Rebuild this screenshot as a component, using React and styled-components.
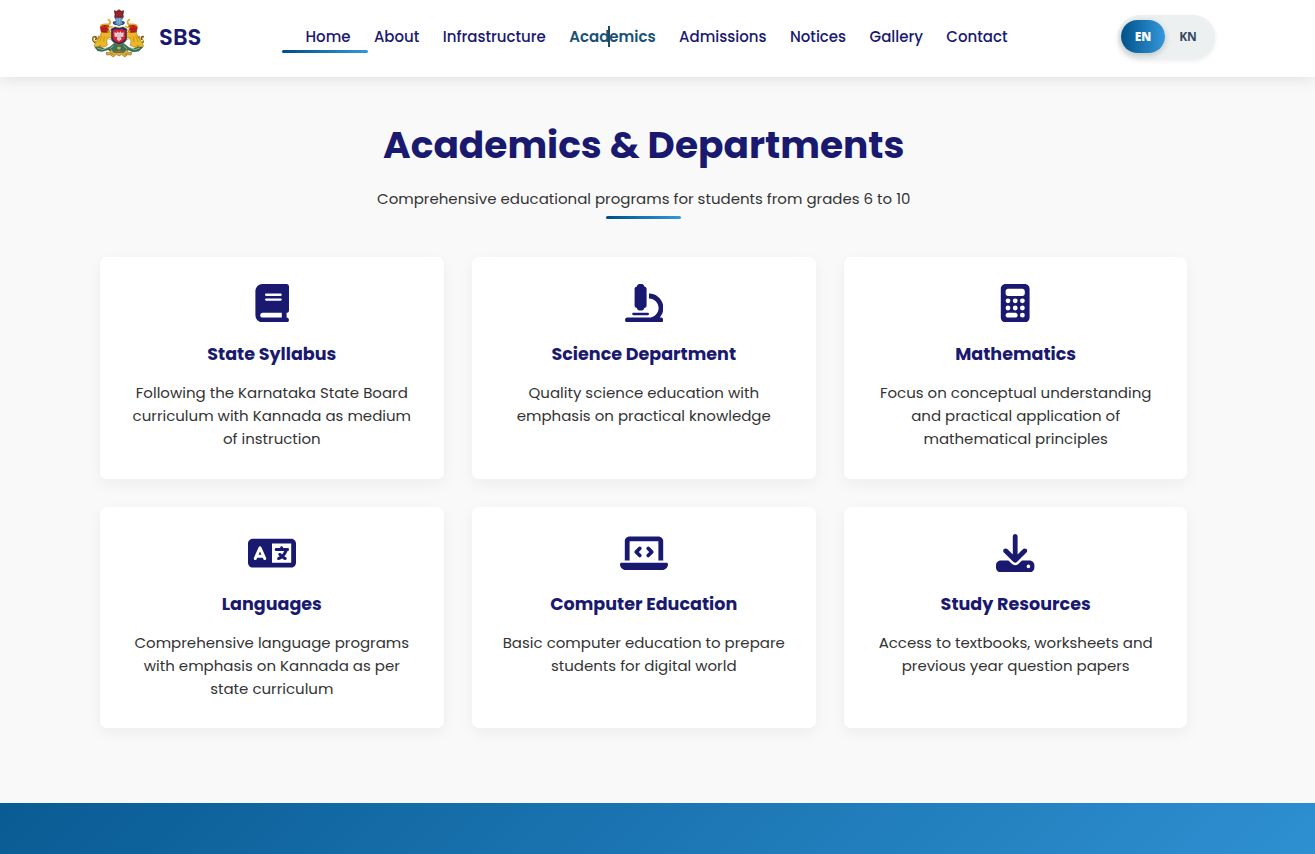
import React from "react";
import styled, { createGlobalStyle } from "styled-components";
import {
  FaBook,
  FaMicroscope,
  FaCalculator,
  FaLanguage,
  FaLaptopCode,
  FaDownload,
} from "react-icons/fa6";

const navy = "#191970";

const GlobalStyle = createGlobalStyle`
  *, *::before, *::after { box-sizing: border-box; }
  body {
    margin: 0;
    background: #f9f9f9;
    color: #333;
    font-family: Poppins, Inter, sans-serif;
    font-size: 15px;
  }
  h1, h2, h3, p { margin: 0; }
`;

const Page = styled.div`
  height: 854px;
  display: flex;
  flex-direction: column;
  overflow: hidden;
`;

const Header = styled.header`
  position: relative;
  flex: none;
  height: 77px;
  display: flex;
  align-items: flex-start;
  padding-left: 92px;
  background: #fff;
  box-shadow: 0 2px 15px rgba(0, 0, 0, 0.1);
`;

const Brand = styled.div`
  width: 213.5px;
  display: flex;
  align-items: flex-start;
  padding-top: 9px;
  gap: 15px;
`;

const BrandName = styled.span`
  padding-top: 15px;
  font-size: 22.8px;
  line-height: 27px;
  font-weight: 600;
  color: ${navy};
`;

const Nav = styled.nav`
  width: 812.5px;
  display: flex;
  gap: 23.4px;
  padding-top: 26px;
`;

const NavLink = styled.a`
  position: relative;
  flex: none;
  line-height: 22px;
  white-space: nowrap;
  font-weight: ${(p) => (p.$active ? 600 : 500)};
  color: ${(p) => (p.$active ? "#1a5276" : navy)};
`;

const Underline = styled.i`
  position: absolute;
  left: -23.5px;
  top: 24px;
  width: 86px;
  height: 3px;
  border-radius: 2px;
  background: linear-gradient(90deg, #004e89, #3498db);
`;

const CenterBar = styled.i`
  position: absolute;
  left: 38.8px;
  top: 0;
  width: 2px;
  height: 21px;
  background: #154c6e;
`;

const LangSwitch = styled.div`
  display: flex;
  align-items: flex-start;
  width: 97px;
  height: 44px;
  margin-top: 15px;
  padding: 5px 3px;
  border-radius: 22px;
  background: #ecf0f1;
  box-shadow: 0 2px 5px rgba(0, 0, 0, 0.08);
`;

const LangButton = styled.button`
  width: ${(p) => (p.$on ? 44 : 46)}px;
  height: 33px;
  padding: 0;
  border: 0;
  border-radius: 17px;
  font: ${(p) => (p.$on ? 800 : 700)} 12px/33px "Open Sans", sans-serif;
  color: ${(p) => (p.$on ? "#fff" : "#34495e")};
  background: ${(p) => (p.$on ? "linear-gradient(90deg, #005288, #3498db)" : "none")};
  box-shadow: ${(p) => (p.$on ? "0 2px 6px rgba(0, 0, 0, 0.2)" : "none")};
`;

const Main = styled.main`
  flex: 1;
  padding: 44px 127.5px 0 100px;
`;

const Intro = styled.section`
  display: flex;
  flex-direction: column;
  align-items: center;
  height: 136px;
`;

const Title = styled.h1`
  font-size: 37.5px;
  line-height: 48px;
  font-weight: 700;
  color: ${navy};
  white-space: nowrap;
`;

const Subtitle = styled.p`
  margin-top: 18px;
  line-height: 23px;
  white-space: nowrap;
`;

const Rule = styled.i`
  margin-top: 6px;
  width: 75px;
  height: 3px;
  border-radius: 2px;
  background: linear-gradient(90deg, #004e89, #3498db);
`;

const Grid = styled.section`
  display: grid;
  grid-template-columns: repeat(3, 1fr);
  grid-auto-rows: 221.5px;
  gap: 28.3px;
`;

const Card = styled.article`
  display: flex;
  flex-direction: column;
  align-items: center;
  padding-top: 27px;
  border-radius: 7px;
  background: #fff;
  box-shadow: 0 5px 15px rgba(0, 0, 0, 0.05);
`;

const CardIcon = styled.span`
  height: 38.4px;
  color: ${navy};
  svg {
    display: block;
    height: 38.4px;
    width: ${(p) => (p.$wide ? 48 : 38.4)}px;
  }
`;

const CardTitle = styled.h3`
  margin-top: 17.6px;
  font-size: 17.55px;
  line-height: 28px;
  font-weight: 700;
  color: ${navy};
`;

const CardText = styled.p`
  margin-top: 13.5px;
  padding: 0 28px;
  line-height: 23px;
  text-align: center;
`;

const Footer = styled.footer`
  flex: none;
  height: 51px;
  background: linear-gradient(135deg, #095b93, #3498db) 0 0 / 100% 270px no-repeat;
`;

const links = [
  "Home",
  "About",
  "Infrastructure",
  "Academics",
  "Admissions",
  "Notices",
  "Gallery",
  "Contact",
];

const cards = [
  [FaBook, "State Syllabus", "Following the Karnataka State Board curriculum with Kannada as medium of instruction"],
  [FaMicroscope, "Science Department", "Quality science education with emphasis on practical knowledge"],
  [FaCalculator, "Mathematics", "Focus on conceptual understanding and practical application of mathematical principles"],
  [FaLanguage, "Languages", "Comprehensive language programs with emphasis on Kannada as per state curriculum", true],
  [FaLaptopCode, "Computer Education", "Basic computer education to prepare students for digital world", true],
  [FaDownload, "Study Resources", "Access to textbooks, worksheets and previous year question papers"],
];

function Supporter() {
  return (
    <g>
      <path d="M24 110C12 107 12 93 20 92c7 0 6 9 1 8M26 110c8-3 2-12 7-20" fill="none" stroke="#7a5a18" strokeWidth="5" />
      <path d="M24 109C14 106 13 94 20 93M26 109c8-3 2-12 7-19" fill="none" stroke="#e9b51e" strokeWidth="3" />
      <path d="M40 79l24-3 10 12-2 8-12-2-4 12 2 12-9 5-14 1 3-7-9 6-11-2 5-12 12-16z" fill="#ebb925" stroke="#8a6415" strokeWidth="1.5" />
      <path d="M36 65c0-8 8-12 17-11l12 5-3 10 3 9-11 3-15-2z" fill="#c7281b" />
      <path d="M38 59c6-7 17-3 24-4 7-2 5-15-3-14" fill="none" stroke="#dba929" strokeWidth="5" />
      <path d="M59 66l15-5M58 77l14-7" stroke="#dba929" strokeWidth="4" />
      <path d="M58 97l13 5M42 89l-7 18M49 91l-2 17" stroke="#b98316" strokeWidth="2" />
      <path d="M39 68l20 1M40 75l18 1" stroke="#701b17" strokeWidth="2" />
      <circle cx="50" cy="59" r="2" fill="#4b3518" />
    </g>
  );
}

function Emblem() {
  return (
    <svg width="52" height="49" viewBox="12 9 156 147" aria-label="Karnataka emblem">
      <path d="M21 124l13-3 15 8 17-6 14-12 26 1 15 12 15 5 13-7 15 2-12 11-17 2-16-6-17 9H76l-16-9-17 5-14-2z" fill="#397358" stroke="#285640" strokeWidth="2" />
      <path d="M28 126l16 5 17-7M155 126l-15 5-17-7M66 128l11-9M117 128l-11-9" stroke="#bed0ad" strokeWidth="2" fill="none" />
      <Supporter />
      <g transform="translate(185 0) scale(-1 1)"><Supporter /></g>
      <path d="M78 46c-7 3-3 11 4 11h21c8-1 10-9 3-12z" fill="#334b7b" />
      <path d="M81 35h23l-4 10 5 8-12 7-13-7 5-8z" fill="#5d9cc7" stroke="#2a4778" strokeWidth="2" />
      <path d="M87 37v13M94 36v17M100 38v12" stroke="#b5dbe9" strokeWidth="1.5" />
      <path d="M79 14l7 2 7-5 7 5 7-2-2 11 1 9H80l1-9z" fill="#8e2229" stroke="#59171d" strokeWidth="2" />
      <path d="M86 22v9M93 19v12M99 23v8" stroke="#a93a3a" strokeWidth="1.5" />
      <path d="M69 68l12-6 12 3 12-3 12 6v30c-2 9-11 14-24 19-13-5-22-10-24-19z" fill="#292a62" stroke="#d5a62d" strokeWidth="1.5" />
      <path d="M74 74l10-5 9 2 9-2 10 5v23c-3 7-10 10-19 14-9-4-16-7-19-14z" fill="#d9202d" />
      <path d="M93 106l-7-7 3-7-9 1-1-14 8 2 1-5 5 5 5-5 2 5 7-2-1 14-9-1 4 7z" fill="#ead5da" />
      <path d="M93 82v20M85 84l4 6M101 84l-4 6" stroke="#b59aa3" strokeWidth="1.5" />
      <path d="M93 120l8 4-4 8h-8l-5-8z" fill="#b8ae5a" stroke="#285640" strokeWidth="2" />
      <path d="M55 139l10 1 4-10 8 9 16-4 16 4 8-9 4 10 10-1-2 8-10-1-9 7-9-8-8 5-8-5-9 8-10-7-10 1z" fill="#dfb13b" stroke="#876522" strokeWidth="2" />
      <path d="M67 142l9 3M78 140l15-1 15 1M110 145l8-3" stroke="#72571d" strokeWidth="2" />
    </svg>
  );
}

export default function App() {
  return (
    <Page>
      <GlobalStyle />
      <Header>
        <Brand>
          <Emblem />
          <BrandName>SBS</BrandName>
        </Brand>
        <Nav>
          {links.map((label) => (
            <NavLink key={label} $active={label === "Academics"}>
              {label}
              {label === "Home" && <Underline />}
              {label === "Academics" && <CenterBar />}
            </NavLink>
          ))}
        </Nav>
        <LangSwitch>
          <LangButton $on>EN</LangButton>
          <LangButton>KN</LangButton>
        </LangSwitch>
      </Header>
      <Main>
        <Intro>
          <Title>Academics &amp; Departments</Title>
          <Subtitle>Comprehensive educational programs for students from grades 6 to 10</Subtitle>
          <Rule />
        </Intro>
        <Grid>
          {cards.map(([Icon, title, text, wide]) => (
            <Card key={title}>
              <CardIcon $wide={wide}><Icon /></CardIcon>
              <CardTitle>{title}</CardTitle>
              <CardText>{text}</CardText>
            </Card>
          ))}
        </Grid>
      </Main>
      <Footer />
    </Page>
  );
}
